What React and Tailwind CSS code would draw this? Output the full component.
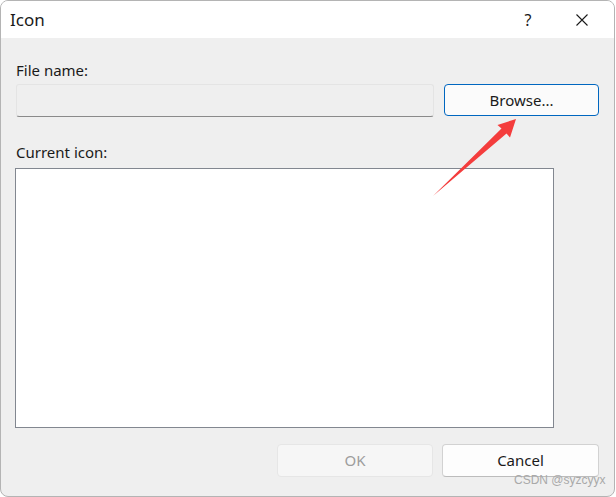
import React from "react";

export default function App() {
  const font = { fontFamily: '"Noto Sans", "Segoe UI", sans-serif' };
  return (
    <div className="relative w-[616px] h-[497px] bg-white overflow-hidden" style={font}>
      <div className="w-[615px] h-[497px] border border-[#b4b4b4] rounded-[8px] overflow-hidden flex flex-col bg-[#efefef]">
        {/* Title bar */}
        <div className="h-[37px] bg-white flex items-center pl-[9px] shrink-0">
          <span className="text-[17px] text-[#1a1a1a] leading-none">Icon</span>
          <div className="ml-auto flex items-center h-full">
            <div className="w-[46px] h-full flex items-center justify-center text-[16px] text-[#1a1a1a]">?</div>
            <div className="w-[46px] h-full flex items-center justify-center mr-[9px] ml-[8px]">
              <svg width="12" height="12" viewBox="0 0 12 12" fill="none" stroke="#1a1a1a" strokeWidth="1.1">
                <path d="M0.5 0.5L11.5 11.5M11.5 0.5L0.5 11.5" />
              </svg>
            </div>
          </div>
        </div>
        {/* Body */}
        <div className="flex-1 flex flex-col pl-[15px]">
          <div className="h-[20px] mt-[22px] flex items-center text-[15px] text-[#1a1a1a]">File name:</div>
          <div className="flex mt-[4px] gap-[10px]">
            <div className="w-[418px] h-[33px] bg-[#efefef] border border-[#e4e4e4] border-b-[#8a8a8a] rounded-[3px]" />
            <button className="w-[155px] h-[32px] bg-[#fbfbfb] border border-[#0067c0] rounded-[4px] text-[15px] text-[#1a1a1a] flex items-center justify-center">
              Browse...
            </button>
          </div>
          <div className="h-[20px] mt-[25px] flex items-center text-[15px] text-[#1a1a1a]">Current icon:</div>
          <div className="w-[539px] h-[260px] mt-[6px] -ml-px bg-white border border-[#828790]" />
          <div className="flex justify-end mt-[16px] pr-[15px] gap-[9px]">
            <div className="w-[156px] h-[33px] bg-[#f6f6f6] border border-[#e6e6e6] rounded-[4px] text-[15px] text-[#9d9d9d] flex items-center justify-center">
              OK
            </div>
            <div className="w-[157px] h-[33px] bg-[#fdfdfd] border border-[#d2d2d2] border-b-[#bcbcbc] rounded-[4px] text-[15px] text-[#1a1a1a] flex items-center justify-center">
              Cancel
            </div>
          </div>
        </div>
      </div>

      {/* Red arrow annotation */}
      <svg className="absolute left-0 top-0 pointer-events-none" width="616" height="497" viewBox="0 0 616 497">
        <polygon
          points="433,196 501.5,128.5 497.5,125 516,119 510,137.5 506.5,133.5"
          fill="#f43d3d"
        />
      </svg>

      {/* Watermark */}
      <div
        className="absolute left-[514px] top-[474px] text-[12px] leading-[12px] text-[#a9a9a9] whitespace-nowrap"
        style={{ fontFamily: '"Liberation Sans", Arial, sans-serif' }}
      >
        CSDN @syzcyyx
      </div>
    </div>
  );
}
